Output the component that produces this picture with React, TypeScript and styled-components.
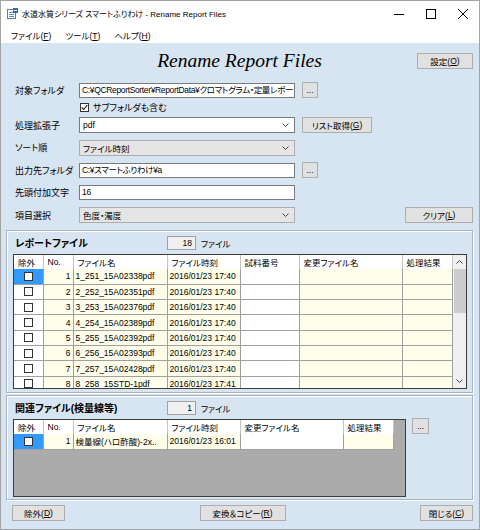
import styled, { createGlobalStyle } from 'styled-components';

const GlobalStyle = createGlobalStyle`
  html, body { margin: 0; padding: 0; background: #ffffff; }
  body {
    font-family: "Liberation Sans", "Noto Sans CJK JP", sans-serif;
    font-size: 9px;
    color: #000;
    font-feature-settings: "palt";
  }
  *, *::before, *::after { box-sizing: border-box; }
`;

const Window = styled.div`
  width: 480px;
  height: 530px;
  border: 1px solid #a4a4a4;
  background: #d7e4f2;
  display: flex;
  flex-direction: column;
  overflow: hidden;
`;

const TitleBar = styled.div`
  height: 25px;
  flex: none;
  background: #fff;
  display: flex;
  align-items: center;
  padding-left: 6px;
`;

const AppTitle = styled.div`
  flex: 1;
  margin-left: 4px;
  font-size: 8px;
  white-space: nowrap;
`;

const WinButton = styled.div`
  width: 32px;
  height: 25px;
  display: flex;
  align-items: center;
  justify-content: center;
`;

const MenuBar = styled.div`
  height: 17px;
  flex: none;
  background: #fff;
  display: flex;
  align-items: center;
  padding-left: 3px;
`;

const MenuItem = styled.span`
  padding: 0 7px;
  font-size: 8.5px;
`;

const U = styled.span`
  text-decoration: underline;
`;

const Header = styled.div`
  height: 36px;
  flex: none;
  display: grid;
  grid-template-columns: 1fr auto 1fr;
  align-items: center;
  padding: 0 6px 0 5px;
`;

const Heading = styled.h1`
  grid-column: 2;
  margin: 0;
  font-family: "Liberation Serif", serif;
  font-style: italic;
  font-weight: normal;
  font-size: 19.5px;
`;

const Button = styled.button<{ $w: number }>`
  width: ${p => p.$w}px;
  height: 16px;
  flex: none;
  padding: 0;
  border: 1px solid #adadad;
  background: #e1e1e1;
  font: inherit;
  font-size: 8.5px;
  color: #000;
  display: flex;
  align-items: center;
  justify-content: center;
`;

const HeaderButton = styled(Button)`
  grid-column: 3;
  justify-self: end;
`;

const Form = styled.div`
  flex: none;
  display: flex;
  flex-direction: column;
  padding: 0 6px 0 14px;
`;

const Row = styled.div<{ $h?: number }>`
  height: ${p => p.$h ?? 22.5}px;
  display: flex;
  align-items: center;
`;

const Label = styled.div`
  width: 64px;
  font-size: 9px;
`;

const TextBox = styled.div`
  width: 216px;
  height: 15px;
  border: 1px solid #7a7a7a;
  background: #fff;
  padding: 0 1px 0 2px;
  line-height: 13px;
  font-size: 8.5px;
  letter-spacing: -0.35px;
  white-space: nowrap;
  overflow: hidden;
`;

const Combo = styled.div<{ $editable?: boolean }>`
  width: 216px;
  height: 16px;
  border: 1px solid ${p => (p.$editable ? '#7a7a7a' : '#acacac')};
  background: ${p => (p.$editable ? '#fff' : '#e5e5e5')};
  padding: 0 5px 0 3px;
  font-size: 8.5px;
  display: flex;
  align-items: center;
  justify-content: space-between;
`;

const SideButton = styled(Button)`
  margin-left: 7px;
`;

const RightButton = styled(Button)`
  margin-left: auto;
`;

const CheckLine = styled.label`
  display: flex;
  align-items: center;
  gap: 4px;
  padding-left: 65px;
  font-size: 9px;
`;

const CheckBox = styled.span`
  width: 9px;
  height: 9px;
  border: 1px solid #333;
  background: #fff;
  display: inline-flex;
  align-items: center;
  justify-content: center;
`;

const Group = styled.div<{ $h: number; $mt: number }>`
  height: ${p => p.$h}px;
  margin: ${p => p.$mt}px 6px 0 5px;
  flex: none;
  border: 1px solid #a8b3bf;
  box-shadow: inset 1px 1px 0 #fff, 1px 1px 0 #fff;
  padding: 0 5px 0 6px;
  display: flex;
  flex-direction: column;
`;

const GroupHeader = styled.div`
  height: 23px;
  flex: none;
  display: flex;
  align-items: center;
  padding-left: 2px;
`;

const GroupTitle = styled.div`
  width: 152px;
  font-size: 10px;
  font-weight: bold;
  white-space: nowrap;
`;

const CountBox = styled.div`
  width: 29px;
  height: 14px;
  border: 1px solid #a0a0a0;
  background: #f0f0f0;
  text-align: right;
  padding-right: 3px;
  line-height: 12px;
  font-size: 8.5px;
`;

const CountUnit = styled.span`
  margin-left: 5px;
  font-size: 8.5px;
`;

const GridRow = styled.div`
  display: flex;
  align-items: flex-start;
  gap: 6px;
`;

const GridFrame = styled.div<{ $w: number; $h: number }>`
  width: ${p => p.$w}px;
  height: ${p => p.$h}px;
  flex: none;
  border: 1px solid #3c3c3c;
  background: #ababab;
  display: flex;
  overflow: hidden;
`;

const Table = styled.table`
  border-collapse: collapse;
  table-layout: fixed;
  align-self: flex-start;
  font-size: 8.5px;
`;

const Th = styled.th`
  height: 14px;
  background: #fff;
  border-right: 1px solid #c4c4c4;
  padding: 0 0 0 4px;
  text-align: left;
  font-weight: normal;
  white-space: nowrap;
  overflow: hidden;
`;

const Td = styled.td<{ $bg?: string; $align?: string }>`
  height: 15.33px;
  padding: 0 2px;
  background: ${p => p.$bg ?? '#fff'};
  border-right: 1px solid #a0a0a0;
  border-bottom: 1px solid #a0a0a0;
  text-align: ${p => p.$align ?? 'left'};
  white-space: nowrap;
  overflow: hidden;
`;

const CheckTd = styled(Td)`
  padding: 0;
  text-align: center;
  line-height: 0;
`;

const ScrollBar = styled.div`
  width: 14px;
  flex: none;
  background: #f0f0f0;
  display: flex;
  flex-direction: column;
`;

const ScrollArrow = styled.div`
  height: 14px;
  flex: none;
  display: flex;
  align-items: center;
  justify-content: center;
`;

const Thumb = styled.div`
  height: 44px;
  flex: none;
  margin: 0 1px;
  background: #cdcdcd;
`;

const Track = styled.div`
  flex: 1;
`;

const Footer = styled.div`
  height: 29px;
  flex: none;
  display: grid;
  grid-template-columns: 1fr auto 1fr;
  align-items: start;
  padding: 5px 6px 0 11px;
`;

const FooterRight = styled(Button)`
  justify-self: end;
`;

const YELLOW = '#fefeea';
const BLUE = '#3399ff';

const reportFiles = [
  ['1_251_15A02338pdf', '2016/01/23 17:40'],
  ['2_252_15A02351pdf', '2016/01/23 17:40'],
  ['3_253_15A02376pdf', '2016/01/23 17:40'],
  ['4_254_15A02389pdf', '2016/01/23 17:40'],
  ['5_255_15A02392pdf', '2016/01/23 17:40'],
  ['6_256_15A02393pdf', '2016/01/23 17:40'],
  ['7_257_15A02428pdf', '2016/01/23 17:40'],
  ['8_258_15STD-1pdf', '2016/01/23 17:41'],
];

function Chevron({ up }: { up?: boolean }) {
  return (
    <svg width="7" height="4" viewBox="0 0 7 4">
      <polyline
        points={up ? '0.5,3.5 3.5,0.5 6.5,3.5' : '0.5,0.5 3.5,3.5 6.5,0.5'}
        fill="none"
        stroke="#444"
        strokeWidth="1"
      />
    </svg>
  );
}

function Box({ checked }: { checked?: boolean }) {
  return (
    <CheckBox>
      {checked && (
        <svg width="7" height="7" viewBox="0 0 7 7">
          <polyline points="0.8,3.5 2.7,5.5 6.3,1.2" fill="none" stroke="#222" strokeWidth="1.1" />
        </svg>
      )}
    </CheckBox>
  );
}

function AppIcon() {
  return (
    <svg width="11" height="11" viewBox="0 0 11 11">
      <rect x="0.5" y="1.5" width="8" height="9" fill="#fff" stroke="#6b7b8f" />
      <path d="M2 4.5h5M2 6.5h5M2 8.5h5" stroke="#5a8fcf" />
      <rect x="6" y="0" width="5" height="5" fill="#2f6db4" />
      <path d="M7 2.5h3" stroke="#fff" />
    </svg>
  );
}

function App() {
  return (
    <>
      <GlobalStyle />
      <Window>
        <TitleBar>
          <AppIcon />
          <AppTitle>水道水質シリーズ スマートふりわけ - Rename Report Files</AppTitle>
          <WinButton>
            <svg width="10" height="10" viewBox="0 0 10 10">
              <path d="M0 5.5h10" stroke="#000" />
            </svg>
          </WinButton>
          <WinButton>
            <svg width="10" height="10" viewBox="0 0 10 10">
              <rect x="0.5" y="0.5" width="9" height="9" fill="none" stroke="#000" />
            </svg>
          </WinButton>
          <WinButton>
            <svg width="10" height="10" viewBox="0 0 10 10">
              <path d="M0 0L10 10M10 0L0 10" stroke="#000" />
            </svg>
          </WinButton>
        </TitleBar>

        <MenuBar>
          <MenuItem>ファイル(<U>F</U>)</MenuItem>
          <MenuItem>ツール(<U>T</U>)</MenuItem>
          <MenuItem>ヘルプ(<U>H</U>)</MenuItem>
        </MenuBar>

        <Header>
          <Heading>Rename Report Files</Heading>
          <HeaderButton $w={56}>設定(<U>O</U>)</HeaderButton>
        </Header>

        <Form>
          <Row $h={22}>
            <Label>対象フォルダ</Label>
            <TextBox>C:¥QCReportSorter¥ReportData¥クロマトグラム・定量レポー</TextBox>
            <SideButton $w={16}>...</SideButton>
          </Row>
          <Row $h={13}>
            <CheckLine>
              <Box checked />
              サブフォルダも含む
            </CheckLine>
          </Row>
          <Row>
            <Label>処理拡張子</Label>
            <Combo $editable>
              <span>pdf</span>
              <Chevron />
            </Combo>
            <SideButton $w={70}>リスト取得(<U>G</U>)</SideButton>
          </Row>
          <Row>
            <Label>ソート順</Label>
            <Combo>
              <span>ファイル時刻</span>
              <Chevron />
            </Combo>
          </Row>
          <Row>
            <Label>出力先フォルダ</Label>
            <TextBox>C:¥スマートふりわけ¥a</TextBox>
            <SideButton $w={16}>...</SideButton>
          </Row>
          <Row>
            <Label>先頭付加文字</Label>
            <TextBox>16</TextBox>
          </Row>
          <Row>
            <Label>項目選択</Label>
            <Combo>
              <span>色度・濁度</span>
              <Chevron />
            </Combo>
            <RightButton $w={68}>クリア(<U>L</U>)</RightButton>
          </Row>
        </Form>

        <Group $h={163} $mt={3.5}>
          <GroupHeader>
            <GroupTitle>レポートファイル</GroupTitle>
            <CountBox>18</CountBox>
            <CountUnit>ファイル</CountUnit>
          </GroupHeader>
          <GridFrame $w={454} $h={135}>
            <Table style={{ width: 438 }}>
              <colgroup>
                <col style={{ width: 29 }} />
                <col style={{ width: 30 }} />
                <col style={{ width: 94 }} />
                <col style={{ width: 73 }} />
                <col style={{ width: 59 }} />
                <col style={{ width: 103 }} />
                <col style={{ width: 50 }} />
              </colgroup>
              <thead>
                <tr>
                  <Th>除外</Th>
                  <Th>No.</Th>
                  <Th>ファイル名</Th>
                  <Th>ファイル時刻</Th>
                  <Th>試料番号</Th>
                  <Th>変更ファイル名</Th>
                  <Th>処理結果</Th>
                </tr>
              </thead>
              <tbody>
                {reportFiles.map(([name, time], i) => (
                  <tr key={name}>
                    <CheckTd $bg={i === 0 ? BLUE : '#fff'}>
                      <Box />
                    </CheckTd>
                    <Td $bg={YELLOW} $align="right">{i + 1}</Td>
                    <Td $bg={YELLOW}>{name}</Td>
                    <Td $bg={YELLOW}>{time}</Td>
                    <Td />
                    <Td $bg={YELLOW} />
                    <Td $bg={YELLOW} />
                  </tr>
                ))}
              </tbody>
            </Table>
            <ScrollBar>
              <ScrollArrow>
                <Chevron up />
              </ScrollArrow>
              <Thumb />
              <Track />
              <ScrollArrow>
                <Chevron />
              </ScrollArrow>
            </ScrollBar>
          </GridFrame>
        </Group>

        <Group $h={105} $mt={2}>
          <GroupHeader>
            <GroupTitle>関連ファイル(検量線等)</GroupTitle>
            <CountBox>1</CountBox>
            <CountUnit>ファイル</CountUnit>
          </GroupHeader>
          <GridRow>
            <GridFrame $w={393} $h={78}>
              <Table style={{ width: 379 }}>
                <colgroup>
                  <col style={{ width: 29 }} />
                  <col style={{ width: 30 }} />
                  <col style={{ width: 94 }} />
                  <col style={{ width: 73 }} />
                  <col style={{ width: 103 }} />
                  <col style={{ width: 50 }} />
                </colgroup>
                <thead>
                  <tr>
                    <Th>除外</Th>
                    <Th>No.</Th>
                    <Th>ファイル名</Th>
                    <Th>ファイル時刻</Th>
                    <Th>変更ファイル名</Th>
                    <Th>処理結果</Th>
                  </tr>
                </thead>
                <tbody>
                  <tr>
                    <CheckTd $bg={BLUE}>
                      <Box />
                    </CheckTd>
                    <Td $bg={YELLOW} $align="right">1</Td>
                    <Td $bg={YELLOW}>検量線(ハロ酢酸)-2x..</Td>
                    <Td $bg={YELLOW}>2016/01/23 16:01</Td>
                    <Td />
                    <Td $bg={YELLOW} />
                  </tr>
                </tbody>
              </Table>
            </GridFrame>
            <Button $w={17} style={{ marginTop: -1 }}>...</Button>
          </GridRow>
        </Group>

        <Footer>
          <Button $w={53}>除外(<U>D</U>)</Button>
          <Button $w={86}>変換＆コピー(<U>R</U>)</Button>
          <FooterRight $w={53}>閉じる(<U>C</U>)</FooterRight>
        </Footer>
      </Window>
    </>
  );
}

export default App;
